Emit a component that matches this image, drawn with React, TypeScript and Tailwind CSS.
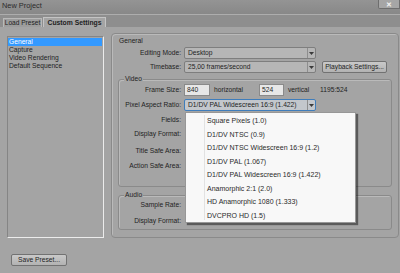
import React from "react";

const ratios = [
  "Square Pixels (1.0)",
  "D1/DV NTSC (0.9)",
  "D1/DV NTSC Widescreen 16:9 (1.2)",
  "D1/DV PAL (1.067)",
  "D1/DV PAL Widescreen 16:9 (1.422)",
  "Anamorphic 2:1 (2.0)",
  "HD Anamorphic 1080 (1.333)",
  "DVCPRO HD (1.5)",
];

function Arrow() {
  return (
    <svg width="5" height="3" viewBox="0 0 5 3" className="block">
      <path d="M0 0 L5 0 L2.5 3 Z" fill="#3a3a3a" />
    </svg>
  );
}

function Select({ value, focused }: { value: string; focused?: boolean }) {
  return (
    <div
      className={
        focused
          ? "w-[132px] h-[12px] flex items-center border border-[#3f7dbb] bg-[#c3c7cc] rounded-[2px]"
          : "w-[132px] h-[12px] flex items-center border border-[#7e7e7e] bg-[#b6b6b6] rounded-[2px]"
      }
    >
      <span className="flex-1 pl-[3px] leading-[10px] whitespace-nowrap overflow-hidden">{value}</span>
      <span className="w-[8px] h-full flex items-center justify-center border-l border-[#8e8e8e]">
        <Arrow />
      </span>
    </div>
  );
}

function Label({ text, w }: { text: string; w: number }) {
  return (
    <span className="text-right leading-[8px] whitespace-nowrap" style={{ width: w }}>
      {text}
    </span>
  );
}

function Button({ text, w }: { text: string; w: string }) {
  return (
    <div
      className={`${w} h-[12px] flex items-center justify-center rounded-[2px] border border-[#727272] bg-gradient-to-b from-[#c9c9c9] to-[#b2b2b2] leading-[10px] whitespace-nowrap`}
    >
      {text}
    </div>
  );
}

export default function App() {
  return (
    <div className="relative w-[400px] h-[273px] overflow-hidden flex flex-col bg-[#a4a4a4] text-[#1e1e1e] text-[6.7px] font-['Liberation_Sans',Arial,sans-serif]">
      {/* title bar */}
      <div className="h-[14px] flex justify-between bg-gradient-to-b from-[#949494] to-[#888888]">
        <span className="pl-[2px] leading-[12px] text-[7.4px] text-[#2b2b2b]">New Project</span>
        <div className="w-[22px] h-[9px] flex items-center justify-center border border-t-0 border-[#6e6e6e] bg-[#a6a6a6] rounded-bl-[2px]">
          <span className="text-[7px] leading-[7px] font-bold text-[#f2f2f2]">✕</span>
        </div>
      </div>
      <div className="h-px bg-[#adadad]" />

      {/* tabs */}
      <div className="h-[12px] flex items-end pl-[3px] gap-[1px] bg-[#8e8e8e]">
        <div className="w-[39px] h-[9px] flex items-center justify-center border border-b-0 border-[#b9b9b9] bg-[#9d9d9d] text-[6.6px] leading-[8px]">
          Load Preset
        </div>
        <div className="w-[63px] h-[10px] flex items-center justify-center border border-b-0 border-[#c4c4c4] bg-[#a4a4a4] font-bold text-[6.8px] leading-[8px]">
          Custom Settings
        </div>
      </div>

      {/* body */}
      <div className="h-[211px] flex items-start">
        <div className="ml-[7px] mt-[9px] w-[97px] h-[202px] border-t border-l border-[#858585] border-b border-r border-b-[#ececec] border-r-[#ececec] pt-px pr-px">
          <div className="h-[8px] leading-[8px] pl-[1px] bg-[#3399ff] text-white">General</div>
          <div className="h-[8px] leading-[8px] pl-[1px]">Capture</div>
          <div className="h-[8px] leading-[8px] pl-[1px]">Video Rendering</div>
          <div className="h-[8px] leading-[8px] pl-[1px]">Default Sequence</div>
        </div>

        <div className="ml-[7px] mt-[6px] w-[288px] h-[205px] border border-[#8a8a8a] rounded-[4px] shadow-[inset_1px_1px_0_#bababa] pl-[6px] pt-[3px] flex flex-col">
          <div className="h-[8px] leading-[8px] pl-[1px]">General</div>

          <div className="mt-[2px] h-[12px] flex items-center gap-[3px]">
            <Label text="Editing Mode:" w={63} />
            <Select value="Desktop" />
          </div>
          <div className="mt-[2px] h-[12px] flex items-center gap-[3px]">
            <Label text="Timebase:" w={63} />
            <Select value="25,00 frames/second" />
            <div className="ml-[3px]">
              <Button text="Playback Settings..." w="w-[65px]" />
            </div>
          </div>

          {/* video group */}
          <div className="relative mt-[6px] w-[274px] h-[108px] border border-[#8a8a8a] rounded-[3px] shadow-[inset_1px_1px_0_#bababa] flex flex-col">
            <span className="absolute -top-[5px] left-[5px] px-[1px] leading-[8px] bg-[#a4a4a4]">Video</span>
            <div className="mt-[4px] h-[12px] flex items-center gap-[3px]">
              <Label text="Frame Size:" w={62} />
              <div className="w-[26px] h-[12px] border border-[#8a8a8a] bg-[#e7e7e7] pl-[2px] leading-[10px]">840</div>
              <span className="ml-[1px] w-[42px] leading-[8px]">horizontal</span>
              <div className="w-[25px] h-[12px] border border-[#8a8a8a] bg-[#e7e7e7] pl-[2px] leading-[10px]">524</div>
              <span className="ml-[1px] w-[29px] leading-[8px]">vertical</span>
              <span className="leading-[8px]">1195:524</span>
            </div>
            <div className="mt-[3px] h-[12px] flex items-center gap-[3px]">
              <Label text="Pixel Aspect Ratio:" w={62} />
              <Select value="D1/DV PAL Widescreen 16:9 (1.422)" focused />
            </div>
            <div className="mt-[5px] h-[8px] flex">
              <Label text="Fields:" w={62} />
            </div>
            <div className="mt-[6px] h-[8px] flex">
              <Label text="Display Format:" w={62} />
            </div>
            <div className="mt-[9px] h-[8px] flex">
              <Label text="Title Safe Area:" w={62} />
            </div>
            <div className="mt-[7px] h-[8px] flex">
              <Label text="Action Safe Area:" w={62} />
            </div>
          </div>

          {/* audio group */}
          <div className="relative mt-[8px] w-[274px] h-[35px] border border-[#8a8a8a] rounded-[3px] shadow-[inset_1px_1px_0_#bababa] flex flex-col">
            <span className="absolute -top-[5px] left-[5px] px-[1px] leading-[8px] bg-[#a4a4a4]">Audio</span>
            <div className="mt-[5px] h-[8px] flex">
              <Label text="Sample Rate:" w={62} />
            </div>
            <div className="mt-[8px] h-[8px] flex">
              <Label text="Display Format:" w={62} />
            </div>
          </div>
        </div>
      </div>

      <div className="mt-[16px] ml-[11px]">
        <Button text="Save Preset..." w="w-[56px]" />
      </div>

      {/* open pixel aspect ratio list */}
      <div className="absolute left-[185px] top-[112px] w-[171px] h-[111px] border border-[#979797] bg-[#f8f8f8] shadow-[2px_2px_1px_rgba(0,0,0,0.45)] pt-px">
        <div className="absolute left-[18px] top-[2px] bottom-[2px] w-px bg-[#e2e2e2]" />
        {ratios.map((r) => (
          <div key={r} className="relative h-[13.5px] leading-[13.5px] pl-[21px] text-[7px] text-[#2a2a2a] whitespace-nowrap">
            {r}
          </div>
        ))}
      </div>
    </div>
  );
}
